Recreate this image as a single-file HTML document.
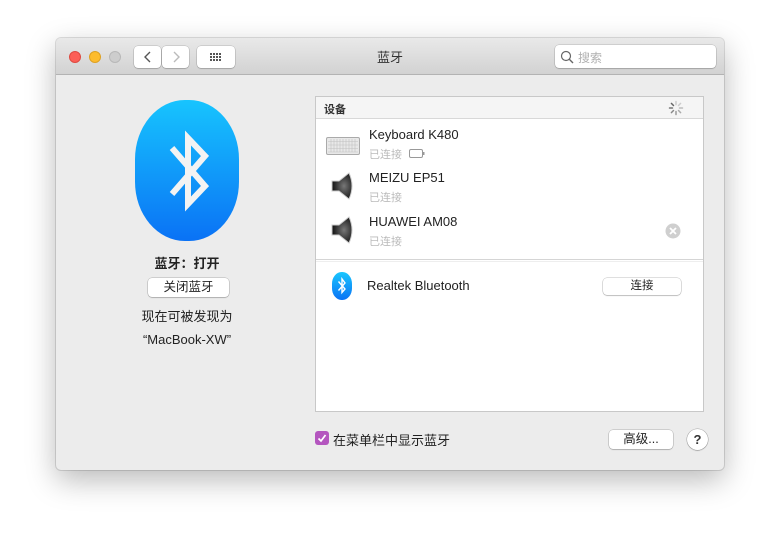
<!DOCTYPE html>
<html><head><meta charset="utf-8"><style>
*{box-sizing:border-box;margin:0;padding:0}
body{width:780px;height:544px;background:#fff;font-family:"Liberation Sans","Noto Sans CJK SC",sans-serif;position:relative;overflow:hidden;color:#222}
.a{position:absolute}
#win{left:56px;top:38px;width:668px;height:432px;border-radius:5px;background:#ececec;box-shadow:0 10px 30px rgba(0,0,0,.28),0 0 0 1px rgba(0,0,0,.12);overflow:hidden}
#tb{left:0;top:0;width:668px;height:37px;background:linear-gradient(#e9e9e9,#d2d2d2);border-bottom:1px solid #b3b3b3}
.dot{width:12px;height:12px;border-radius:50%;top:13px}
.btn{background:#fff;border-radius:4px;box-shadow:0 0 0 .5px rgba(0,0,0,.2),0 1px 1px rgba(0,0,0,.15)}
.pb{background:#fff;border-radius:4px;box-shadow:0 0 0 .5px rgba(0,0,0,.25),0 1px 1px rgba(0,0,0,.15);font-size:12px;text-align:center;color:#222}
.nm{font-size:13px;color:#222}
.sub{font-size:11px;color:#bbb}
</style></head><body>
<div id="win" class="a">
 <div id="tb" class="a">
  <div class="a dot" style="left:13px;background:#fc5f57;border:.5px solid #de4a41"></div>
  <div class="a dot" style="left:33px;background:#fdbc2e;border:.5px solid #dea123"></div>
  <div class="a dot" style="left:53px;background:#cdcdcd;border:.5px solid #b8b8b8"></div>
  <div class="a btn" style="left:78px;top:8px;width:27px;height:22px"></div>
  <div class="a btn" style="left:106px;top:8px;width:27px;height:22px"></div>
  <svg class="a" style="left:78px;top:8px" width="56" height="22"><path d="M16 6 L11 11 L16 16" stroke="#555" stroke-width="1.4" fill="none"/><path d="M40 6 L45 11 L40 16" stroke="#bbb" stroke-width="1.4" fill="none"/></svg>
  <div class="a btn" style="left:141px;top:8px;width:38px;height:22px"></div>
  <svg class="a" style="left:141px;top:8px" width="38" height="22"><g fill="#555">
   <rect x="13" y="7" width="2" height="2"/><rect x="16" y="7" width="2" height="2"/><rect x="19" y="7" width="2" height="2"/><rect x="22" y="7" width="2" height="2"/>
   <rect x="13" y="10" width="2" height="2"/><rect x="16" y="10" width="2" height="2"/><rect x="19" y="10" width="2" height="2"/><rect x="22" y="10" width="2" height="2"/>
   <rect x="13" y="13" width="2" height="2"/><rect x="16" y="13" width="2" height="2"/><rect x="19" y="13" width="2" height="2"/><rect x="22" y="13" width="2" height="2"/></g></svg>
  <div class="a" style="left:0;width:668px;top:9px;text-align:center;font-size:13px;color:#333">蓝牙</div>
  <div class="a btn" style="left:499px;top:7px;width:161px;height:23px"></div>
  <svg class="a" style="left:504px;top:12px" width="14" height="14"><circle cx="6" cy="6" r="4.5" stroke="#666" stroke-width="1.2" fill="none"/><path d="M9.3 9.3 L13 13" stroke="#666" stroke-width="1.4"/></svg>
  <div class="a" style="left:522px;top:11px;font-size:12px;color:#b0b0b0">搜索</div>
 </div>
 <div class="a" style="left:79px;top:62px;width:104px;height:141px;border-radius:48%/42%;background:linear-gradient(#17c4fe,#0a72f5)"></div>
 <svg class="a" style="left:79px;top:62px" width="104" height="141"><path d="M37 48 L70 86 L53 104 L53 38 L70 56 L37 94" stroke="#f3f3f3" stroke-width="6" fill="none" stroke-linejoin="miter"/></svg>
 <div class="a" style="left:56px;width:150px;top:215px;text-align:center;font-size:13px;font-weight:bold">蓝牙：打开</div>
 <div class="a pb" style="left:92px;top:240px;width:81px;height:19px;line-height:19px;font-size:12.5px">关闭蓝牙</div>
 <div class="a" style="left:56px;width:150px;top:268px;text-align:center;font-size:13px">现在可被发现为</div>
 <div class="a" style="left:56px;width:150px;top:294px;text-align:center;font-size:13px">“MacBook-XW”</div>
 <div class="a" style="left:259px;top:58px;width:389px;height:316px;background:#fff;border:1px solid #c8c8c8">
  <div class="a" style="left:0;top:0;width:387px;height:22px;background:#f5f5f5;border-bottom:1px solid #d8d8d8"></div>
  <div class="a" style="left:8px;top:4px;font-size:11px;font-weight:bold;color:#333">设备</div>
  <svg class="a" style="left:352px;top:3px" width="16" height="16"><g stroke-width="1.5" stroke-linecap="round">
   <path d="M8 1.5V4.5" stroke="#ccc"/><path d="M12.6 3.4L10.5 5.5" stroke="#ccc"/><path d="M14.5 8H11.5" stroke="#bbb"/><path d="M12.6 12.6L10.5 10.5" stroke="#aaa"/><path d="M8 14.5V11.5" stroke="#999"/><path d="M3.4 12.6L5.5 10.5" stroke="#888"/><path d="M1.5 8H4.5" stroke="#777"/><path d="M3.4 3.4L5.5 5.5" stroke="#666"/></g></svg>
  <svg class="a" style="left:10px;top:40px" width="34" height="18"><rect x=".5" y=".5" width="33" height="17" rx="1.5" fill="#e8e8e8" stroke="#aaa"/><g stroke="#c0c0c0" stroke-width=".6"><path d="M2 4.5H32M2 8H32M2 11.5H32M2 15H32"/><path d="M5 2V15M8 2V15M11 2V15M14 2V15M17 2V15M20 2V15M23 2V15M26 2V15M29 2V15"/></g></svg>
  <div class="a nm" style="left:53px;top:30px">Keyboard K480</div>
  <div class="a sub" style="left:53px;top:49px">已连接</div>
  <svg class="a" style="left:93px;top:52px" width="16" height="9"><rect x=".5" y=".5" width="13" height="8" rx="1.5" fill="none" stroke="#999"/><rect x="14" y="3" width="1.5" height="3" fill="#999"/></svg>
  <svg class="a" style="left:13px;top:74px" width="28" height="30"><defs><radialGradient id="sg" cx=".6" cy=".5" r=".6"><stop offset="0" stop-color="#777"/><stop offset="1" stop-color="#111"/></radialGradient></defs><path d="M3 10 L10 10 L20 2 Q26 15 20 28 L10 20 L3 20 Z" fill="url(#sg)" stroke="#ccc" stroke-width="1"/></svg>
  <div class="a nm" style="left:53px;top:73px">MEIZU EP51</div>
  <div class="a sub" style="left:53px;top:92px">已连接</div>
  <svg class="a" style="left:13px;top:118px" width="28" height="30"><path d="M3 10 L10 10 L20 2 Q26 15 20 28 L10 20 L3 20 Z" fill="url(#sg)" stroke="#ccc" stroke-width="1"/></svg>
  <div class="a nm" style="left:53px;top:117px">HUAWEI AM08</div>
  <div class="a sub" style="left:53px;top:136px">已连接</div>
  <svg class="a" style="left:349px;top:126px" width="16" height="16"><circle cx="8" cy="8" r="7.5" fill="#cfcfcf"/><path d="M5 5L11 11M11 5L5 11" stroke="#fff" stroke-width="1.8"/></svg>
  <div class="a" style="left:0;top:162px;width:387px;height:1px;background:#d5d5d5"></div>
  <div class="a" style="left:0;top:164px;width:387px;height:1px;background:#eee"></div>
  <div class="a" style="left:16px;top:175px;width:20px;height:28px;border-radius:48%/42%;background:linear-gradient(#1ac6fe,#0a72f5)"></div>
  <svg class="a" style="left:16px;top:175px" width="20" height="28"><path d="M6.5 9.5 L13 17 L10 20.5 L10 7 L13 11 L6.5 18.5" stroke="#fff" stroke-width="1.4" fill="none"/></svg>
  <div class="a nm" style="left:51px;top:181px">Realtek Bluetooth</div>
  <div class="a pb" style="left:287px;top:181px;width:78px;height:17px;line-height:17px;font-size:11.5px">连接</div>
 </div>
 <div class="a" style="left:259px;top:393px;width:14px;height:14px;border-radius:3px;background:#b456bf"></div>
 <svg class="a" style="left:259px;top:393px" width="14" height="14"><path d="M3.5 7.5 L6 10 L10.5 4" stroke="#fff" stroke-width="1.7" fill="none"/></svg>
 <div class="a" style="left:277px;top:392px;font-size:13px">在菜单栏中显示蓝牙</div>
 <div class="a pb" style="left:553px;top:392px;width:64px;height:19px;line-height:19px;font-size:12.5px">高级...</div>
 <div class="a" style="left:631px;top:391px;width:21px;height:21px;border-radius:50%;background:#fff;box-shadow:0 0 0 .5px rgba(0,0,0,.3),0 1px 1px rgba(0,0,0,.15);text-align:center;line-height:21px;font-size:13px;font-weight:bold;color:#333">?</div>
</div>
</body></html>
